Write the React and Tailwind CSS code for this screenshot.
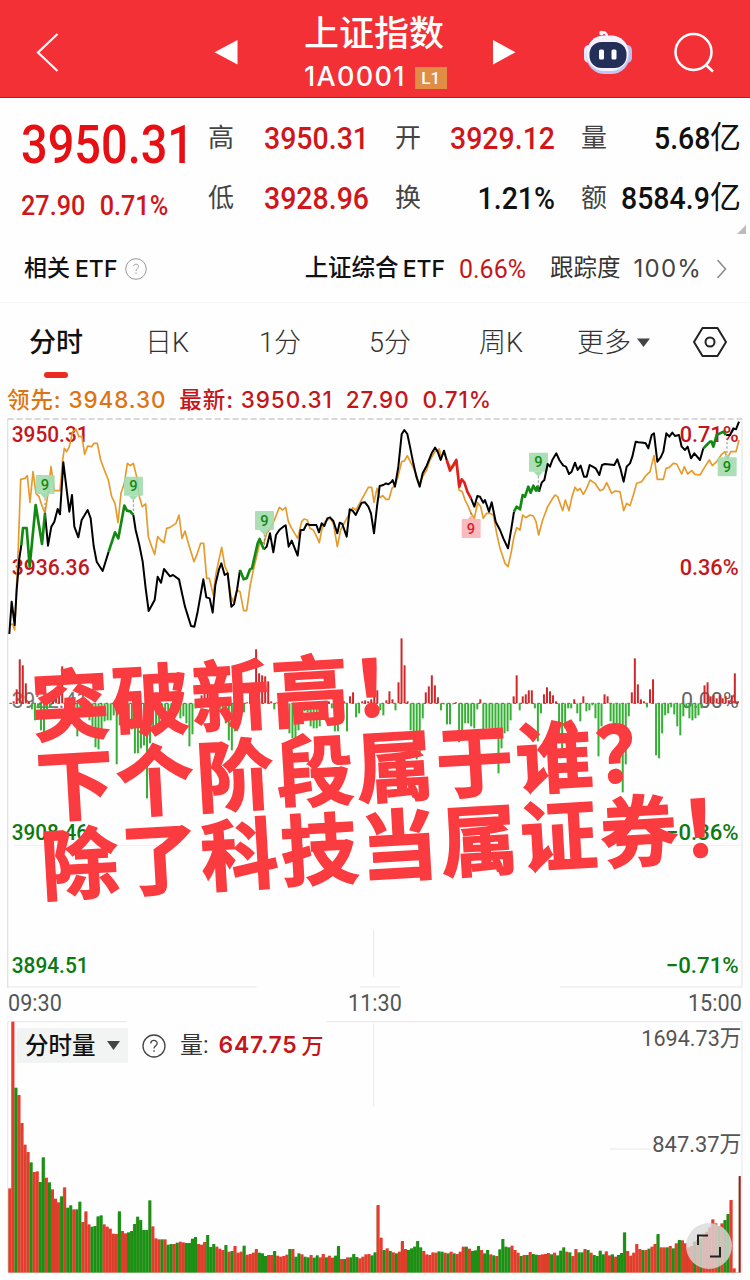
import React from 'react'

const quotes = [
  { label: '高', value: '3950.31', color: 'text-[#d0161a]' },
  { label: '开', value: '3929.12', color: 'text-[#d0161a]' },
  { label: '量', value: '5.68', unit: '亿', color: 'text-[#111]' },
  { label: '低', value: '3928.96', color: 'text-[#d0161a]' },
  { label: '换', value: '1.21%', color: 'text-[#111]' },
  { label: '额', value: '8584.9', unit: '亿', color: 'text-[#111]' }
]

const tabs = ['分时', '日K', '1分', '5分', '周K']

// chart points are stored in chart units, three units to one css pixel
const averageLine =
  '30,975 38,972 44,990 50,850 55,740 62,538 75,535 82,527 90,607 99,515 108,580 117,590 127,620 135,640 144,580 153,500 163,572 180,572 188,480 193,445 200,455 208,440 218,395 228,388 237,410 246,410 254,463 263,438 275,440 282,430 292,430 302,480 315,515 325,540 335,590 345,610 354,668 363,580 373,550 382,490 391,497 400,490 410,530 418,590 427,620 437,612 445,710 455,740 464,763 473,710 482,720 492,728 500,685 510,682 528,670 537,645 546,715 555,693 565,730 582,785 592,760 602,730 611,730 620,835 628,835 640,885 648,820 665,742 675,800 682,815 693,890 700,905 711,870 720,875 731,932 740,932 750,860 760,810 770,770 780,725 792,730 800,700 812,685 825,655 838,622 848,630 857,622 865,665 875,685 893,715 905,665 912,657 922,660 930,685 940,690 950,710 958,728 965,690 975,665 990,655 1000,670 1012,740 1022,690 1035,665 1049,640 1058,623 1068,630 1087,595 1105,562 1115,562 1122,607 1131,565 1140,593 1148,587 1158,598 1167,598 1176,565 1185,555 1194,530 1205,485 1213,483 1222,467 1235,493 1248,520 1258,555 1268,530 1280,510 1290,480 1305,455 1318,447 1322,470 1332,458 1345,490 1355,505 1369,490 1377,570 1387,575 1395,600 1405,620 1413,640 1423,655 1433,608 1442,620 1450,655 1460,640 1470,640 1480,645 1490,700 1500,745 1515,790 1524,800 1533,760 1542,710 1550,683 1560,690 1568,645 1577,653 1590,645 1600,648 1608,665 1616,705 1628,660 1643,620 1655,600 1665,585 1673,590 1688,632 1696,600 1707,632 1716,590 1725,562 1733,572 1740,565 1750,583 1760,565 1770,540 1785,550 1800,572 1810,568 1820,548 1835,580 1845,573 1860,575 1871,632 1880,610 1890,617 1900,585 1910,550 1925,545 1935,530 1950,515 1962,467 1972,538 1990,538 1998,505 2008,502 2020,490 2030,492 2045,522 2053,500 2063,522 2075,512 2085,523 2100,525 2115,500 2128,480 2137,497 2150,485 2165,463 2175,455 2182,475 2192,455 2208,455 2217,420'

const priceLines = [
  {
    color: '#000',
    points: '28,1002 35,905 44,975 50,870 58,775 64,735'
  },
  {
    color: '#000',
    points:
      '135,640 144,737 154,680 163,665 173,627 180,643 190,487 208,635 216,585 223,680 235,712 245,660 263,630 272,655 281,738 290,785 308,813 326,755'
  },
  {
    color: '#000',
    points:
      '400,645 407,690 418,735 428,785 437,865 446,933 464,900 473,830 483,848 492,807 510,829 519,825 537,838 546,880 555,920 573,978 583,980 592,940 610,838 619,892 629,895 638,938 646,855 657,808 664,790 674,825 683,820 694,920 702,913 711,870 720,810'
  },
  {
    color: '#000',
    points:
      '792,748 800,740 810,700 820,757 828,705 838,690 850,680 857,676 866,740 875,722 893,767 902,690 911,690 920,672 930,675 940,675 949,675 957,697 965,670 973,678 982,655 990,652 1000,663 1012,700 1019,668 1027,672 1040,710 1049,628 1058,632 1067,645 1085,608 1095,607 1105,620 1113,640 1122,700 1131,620 1139,558 1150,555 1158,550 1165,553 1175,545 1178,540 1185,560 1195,500 1205,403 1213,390 1222,402 1231,445 1240,490 1249,530 1259,560 1268,520 1280,497 1295,460 1305,443 1313,455 1322,480 1332,452 1340,480'
  },
  {
    color: '#000',
    points:
      '1413,595 1423,620 1432,588 1440,590 1450,608 1455,600 1467,635 1475,607 1481,635 1487,665 1500,690 1510,715 1524,745 1535,680 1542,635'
  },
  {
    color: '#000',
    points:
      '1617,575 1625,548 1633,540 1643,492 1650,500 1657,480 1669,460 1678,480 1690,497 1698,500 1707,522 1715,515 1725,488 1733,510 1742,497 1752,530 1760,530 1769,495 1778,500 1787,505 1798,525 1806,495 1815,492 1843,495 1852,478 1861,505 1871,545 1880,500 1890,490 1897,470 1907,425 1915,427 1930,428 1937,430 1945,445 1955,405 1962,400 1972,485 1982,472 1990,455 1999,400 2008,410 2017,398 2025,408 2037,405 2045,440 2055,450 2063,440 2073,475 2083,460 2100,480 2110,445'
  },
  { color: '#000', points: '2178,405 2190,405 2200,385 2208,388 2217,365' },
  { color: '#128a12', points: '64,735 69,684 80,684 89,800 107,615 126,732 135,640' },
  { color: '#128a12', points: '326,755 345,697 355,715 373,617 381,632 391,634 400,645' },
  { color: '#128a12', points: '720,810 731,838 740,835 750,808 756,805 764,770 773,730 779,717 786,735 792,748' },
  {
    color: '#128a12',
    points: '1542,635 1550,620 1560,628 1568,585 1575,590 1585,560 1592,578 1600,557 1608,572 1612,560 1617,575'
  },
  { color: '#128a12', points: '2110,445 2120,435 2130,425 2135,425 2140,440 2150,405 2160,400 2170,395 2178,405' },
  { color: '#e0201c', points: '1340,480 1350,512 1369,480 1378,560 1385,538 1393,547 1402,575 1413,595' }
]

const markers = [
  { x: 107, y: 525, tail: 'down', to: 640 },
  { x: 372, y: 530, tail: 'down', to: 645 },
  { x: 765, y: 633, tail: 'down', to: 740 },
  { x: 1587, y: 458, tail: 'down', to: 570 },
  { x: 2153, y: 472, tail: 'up', to: 410 },
  { x: 1385, y: 657, tail: 'up', to: 630, red: true }
]

const leftLabels = [
  { text: '3950.31', y: 426, color: '#c4161a', w: 231 },
  { text: '3936.36', y: 824, color: '#c4161a', w: 234 },
  { text: '3922.41', y: 1223, color: '#777', w: 229, light: true },
  { text: '3908.46', y: 1619, color: '#0b7a10', w: 229 },
  { text: '3894.51', y: 2018, color: '#0b7a10', w: 231 }
]

const rightLabels = [
  { text: '0.71%', y: 426, color: '#c4161a', w: 177 },
  { text: '0.36%', y: 824, color: '#c4161a', w: 177 },
  { text: '0.00%', y: 1223, color: '#666', w: 173, light: true },
  { text: '−0.36%', y: 1619, color: '#0b7a10', w: 218 },
  { text: '−0.71%', y: 2018, color: '#0b7a10', w: 219 }
]

const flow = [
  0, 2, 14, 44, 38, 20, 2, -6, -17, -5, -27, -29, -6, -4, 3, 10, 14, 37, -5, -8, -6, -9, -33, -10, -7, -9, -17, -23,
  -44, -46, -33, -18, -17, -17, -12, -61, -22, -18, -20, -20, -26, -50, -50, -45, -42, -95, -40, -25, -25, -22, -20,
  -18, -14, -16, -14, -10, -15, -13, -20, -43, -31, -5, 3, 8, 12, 14, 18, 10, 6, -6, -12, -20, -37, -47, -28, -10, -6,
  -9, 1, 12, 20, 54, 30, 28, 27, 22, 2, -6, 1, 2, -3, -15, -30, -35, -35, -27, -20, -8, -9, -23, -25, -25, -23, -6,
  -3, 2, -5, -28, -28, -4, 2, -28, 7, 11, -14, -10, 2, 3, 2, 4, 45, 13, -7, -12, 3, 12, 4, -7, 21, 65, 38, 2, -27,
  -45, -56, -50, -15, 11, 17, 28, 18, 6, -7, -1, -21, -21, -1, 1, -39, -37, -20, -20, -23, -25, -6, 4, -35, -25, -25,
  -25, -27, -70, -45, -30, -28, -17, 7, 28, -7, 7, 9, 13, 13, -5, -38, -10, 9, 16, 12, 8, 2, -40, -45, -25, -5, -5, 4,
  -10, -18, 7, -8, -7, -2, -15, -53, -23, 9, 7, -18, -20, -20, -27, -89, -61, -13, 11, 45, 19, 4, 2, -4, 14, 24, -52,
  -55, -30, -12, -10, -4, -11, -23, -32, -13, -5, -15, -17, -15, -12, -5, 18, 21, 7, 8, 5, 8, 5, 7, 3, 8, 30, 2
]

// top edge of every minute's volume bar, suffixed with its direction
const volumes =
  '745r 245r 443g 465r 549r 614r 636r 667g 696r 694r 726g 652g 713r 727g 748r 776r 787r 769g 742r 803g 796g 808r 808g 785g 846r 814r 853r 860g 858g 829g 826g 853r 860r 866r 881r 882r 814g 873r 880r 877g 873g 852g 830g 840g 870g 870g 781g 859r 895r 898r 898g 898r 914g 912g 912r 908g 905r 907r 909g 909g 896g 891g 912r 914r 906r 885g 921g 912g 920r 926r 930r 915g 935r 933g 918r 938r 935r 917g 944r 942r 938r 927r 938g 940g 948g 945r 945r 933g 947r 950r 948r 944r 927g 927r 950g 940g 943r 950g 952g 945r 953g 946g 952r 942r 952g 947r 953r 947g 918g 957r 957g 952r 952g 942g 951g 955r 950r 943r 942r 946g 937g 795r 893r 930g 925r 933g 937r 940g 935r 903r 927r 930g 925g 920g 903g 922g 933r 943r 945r 937r 938r 934g 935g 938r 940g 935r 940g 942r 935r 920r 920g 926r 933g 931g 918g 930r 940g 930g 943r 946g 948r 928g 897g 920g 922g 917r 930r 938r 948g 945r 945g 936r 942g 944g 945r 943r 942r 939r 943g 938r 946g 932g 922g 935r 937g 948r 927r 937g 937g 927r 930g 938r 945g 948g 932g 943g 934r 946r 943g 950r 945g 939g 877g 933r 947r 938r 912r 927r 930g 930r 926g 920r 912r 882g 922r 922r 922g 918r 925g 910r 900g 901r 910r 922r 918r 905g 900r 895g 885r 875r 862r 838r 850r 858g 850r 840g 822g 780r 985r 997r 708r'.split(
    ' '
  )

const AxisLabel = ({ x, y, text, color, w, light, anchor }) => (
  <text
    x={x}
    y={y}
    fill={color}
    fontSize="67"
    fontFamily="Roboto, sans-serif"
    fontWeight={light ? 400 : 500}
    textLength={w}
    lengthAdjust="spacingAndGlyphs"
    textAnchor={anchor}
  >
    {text}
  </text>
)

const Marker = ({ x, y, tail, to, red }) => {
  const box = red ? '#f9b4b7' : '#a3dcae'
  return (
    <g>
      <line
        x1={x + 28}
        x2={x + 28}
        y1={tail === 'down' ? y + 57 : y}
        y2={to}
        stroke="#777"
        strokeWidth="2.5"
        strokeDasharray="7 6"
      />
      <rect x={x} y={y} width="57" height="57" rx="3" fill={box} opacity="0.9" />
      <path
        d={
          tail === 'down'
            ? `M${x + 14} ${y + 57}L${x + 28} ${y + 72}L${x + 42} ${y + 57}Z`
            : `M${x + 18} ${y}L${x + 28} ${y - 10}L${x + 38} ${y}Z`
        }
        fill={box}
      />
      <text
        x={x + 28}
        y={y + 44}
        textAnchor="middle"
        fontSize="44"
        fontFamily="Roboto, sans-serif"
        fontWeight="500"
        fill={red ? '#d8222a' : '#128a12'}
      >
        9
      </text>
    </g>
  )
}

const Robot = () => (
  <svg className="h-[46px] w-[50px]" viewBox="0 0 50 46">
    <path d="M24 8C24 4 21 2.500 18.500 3.500" fill="none" stroke="#f4f2ff" strokeWidth="2.500" strokeLinecap="round" />
    <circle cx="18.500" cy="4" r="2.200" fill="#fff" />
    <rect x="1" y="16" width="10" height="18" rx="5" fill="#e9e8fb" />
    <rect x="39" y="16" width="10" height="18" rx="5" fill="#b9bdf0" />
    <rect x="3.500" y="7" width="43" height="38" rx="18" fill="#c3c5f2" />
    <rect x="3.500" y="6.500" width="42" height="35.500" rx="17.500" fill="#f3f2fd" />
    <rect x="6.500" y="13" width="37" height="26" rx="12" fill="#232f56" />
    <rect x="16" y="20.500" width="5" height="10" rx="1.500" fill="#fff" />
    <rect x="28.500" y="20.500" width="5" height="10" rx="1.500" fill="#fff" />
  </svg>
)

const Header = () => (
  <header className="grid h-[98px] grid-cols-[214px_90px_141px_71px_68px_90px_auto] border-b border-[#a3242c] bg-[#f43037] text-white">
    <div className="pt-[32px] pl-[36px]">
      <svg className="h-[40px] w-[24px]" viewBox="0 0 24 40">
        <path d="M21.500 2L2 20.500L21.500 39" fill="none" stroke="#fff" strokeWidth="2.200" />
      </svg>
    </div>
    <svg className="mt-[39px] h-[26px] w-[24px]" viewBox="0 0 24 26">
      <path d="M0.500 13.300L23.500 1V25.500Z" fill="#fff" />
    </svg>
    <div className="flex flex-col">
      <h1 className="mt-[12px] text-[35px] leading-[46px] font-medium whitespace-nowrap">上证指数</h1>
      <div className="mt-[5px] flex items-center">
        <span className="font-['Inter'] text-[27px] leading-[28px] font-medium tracking-[1.3px]">1A0001</span>
        <span className="mt-[1px] ml-[9px] h-[22px] w-[32px] shrink-0 bg-[#e28d45] text-center text-[17px] leading-[22px] font-medium">
          L1
        </span>
      </div>
    </div>
    <div className="flex justify-end pt-[39px]">
      <svg className="h-[26px] w-[24px]" viewBox="0 0 24 26">
        <path d="M23.500 13.300L1 1V25.500Z" fill="#fff" />
      </svg>
    </div>
    <div />
    <div className="-ml-[1px] pt-[29px]">
      <Robot />
    </div>
    <svg className="mt-[31px] h-[44px] w-[44px]" viewBox="0 0 44 44">
      <circle cx="19.500" cy="21" r="18" fill="none" stroke="#fff" strokeWidth="2.500" />
      <path d="M31.500 33.500L39 40.500" stroke="#fff" strokeWidth="2.500" />
    </svg>
  </header>
)

const Quote = () => (
  <section className="relative flex h-[138px]">
    <div className="w-[208px] pl-[21px]">
      <p className="mt-[19px] origin-left scale-x-[0.885] text-[53px] leading-[56px] font-medium text-[#e60f14]">
        3950.31
      </p>
      <p className="mt-[17px] flex origin-left scale-x-[0.9] gap-[16px] text-[28px] leading-[32px] font-medium text-[#d0161a]">
        <span>27.90</span>
        <span>0.71%</span>
      </p>
    </div>
    <div className="mt-[10px] grid h-[120px] w-[533px] grid-cols-[161px_26px_160px_26px_160px] grid-rows-[60px_60px]">
      {[0, 3].map((row) => (
        <React.Fragment key={row}>
          <QuoteCell quote={quotes[row]} />
          <div />
          <QuoteCell quote={quotes[row + 1]} />
          <div />
          <QuoteCell quote={quotes[row + 2]} />
        </React.Fragment>
      ))}
    </div>
    <svg className="absolute right-[4px] bottom-[2px] h-[9px] w-[9px]" viewBox="0 0 9 9">
      <path d="M9 0V9H0Z" fill="#bbb" />
    </svg>
  </section>
)

const QuoteCell = ({ quote }) => (
  <div className="flex items-center justify-between">
    <span className="text-[26px] text-[#444]">{quote.label}</span>
    <span
      className={`flex w-0 items-center justify-end text-[32px] leading-[40px] font-medium whitespace-nowrap ${quote.color}`}
    >
      <span className="origin-right scale-x-[0.89]">{quote.value}</span>
      {quote.unit && <span className="text-[31px] font-normal">{quote.unit}</span>}
    </span>
  </div>
)

const EtfRow = () => (
  <section className="flex h-[66px] items-center pr-[23px] pl-[24px] text-[23px] whitespace-nowrap text-[#111]">
    <span className="font-medium">相关</span>
    <span className="ml-[5px] font-['Inter'] font-medium">ETF</span>
    <svg className="ml-[8px] h-[22px] w-[22px]" viewBox="0 0 22 22">
      <circle cx="11" cy="11" r="10.300" fill="none" stroke="#999" strokeWidth="1" />
      <path d="M8.500 8C9 5.500 13.500 5.500 13.500 8.500C13.500 10.500 11 10.500 11 13" fill="none" stroke="#999" />
      <path d="M11 14.500V16" stroke="#999" />
    </svg>
    <div className="ml-auto flex items-center">
      <span className="text-[23.500px] font-medium">上证综合</span>
      <span className="ml-[4px] font-['Inter'] font-medium">ETF</span>
      <span className="ml-[14px] w-[67px] origin-left scale-x-[0.96] text-[26px] text-[#c4161a]">0.66%</span>
      <span className="ml-[24px] text-[23.500px] text-[#333]">跟踪度</span>
      <span className="ml-[13px] font-['Inter'] text-[24px] tracking-[1.2px] text-[#444]">100%</span>
      <svg className="ml-[14px] h-[20px] w-[11px]" viewBox="0 0 11 20">
        <path d="M1.500 1L9.500 10L1.500 19" fill="none" stroke="#888" strokeWidth="1.500" />
      </svg>
    </div>
  </section>
)

const Tabs = () => (
  <nav className="grid h-[80px] grid-cols-[116px_114px_110px_110px_98px_117px_auto] border-t border-[#f7f7f7] pl-[29px] text-[27px] font-light text-[#333]">
    {tabs.map((tab, index) => (
      <div key={tab} className="flex flex-col items-start pt-[20px] leading-[40px]">
        <span className={index === 0 ? 'font-medium text-[#111]' : ''}>{tab}</span>
        {index === 0 && <span className="mt-[9px] ml-[15px] h-[6px] w-[24px] rounded-full bg-[#ee2b23]" />}
      </div>
    ))}
    <div className="flex items-start pt-[20px] leading-[40px]">
      更多
      <svg className="mt-[15px] ml-[6px] h-[9px] w-[13px]" viewBox="0 0 13 9">
        <path d="M0 0.500H13L6.500 9Z" fill="#444" />
      </svg>
    </div>
    <svg className="mt-[23px] -ml-[1px] h-[32px] w-[34px]" viewBox="0 0 34 32">
      <path d="M9.500 2H24.500L33 16L24.500 30H9.500L1 16Z" fill="none" stroke="#222" strokeWidth="2" strokeLinejoin="round" />
      <circle cx="17" cy="16" r="4.500" fill="none" stroke="#222" strokeWidth="2" />
    </svg>
  </nav>
)

const Legend = () => (
  <div className="flex h-[35px] items-center pl-[7px] font-['Inter','Noto_Sans_CJK_SC',sans-serif] text-[22.500px] leading-[35px] font-medium tracking-[0.9px] whitespace-nowrap text-[#c4161a]">
    <span className="text-[#dd7414]">领先: 3948.30</span>
    <span className="ml-[13px]">最新: 3950.31</span>
    <span className="ml-[13px]">27.90</span>
    <span className="ml-[13px]">0.71%</span>
  </div>
)

const PriceChart = () => (
  <div className="relative h-[571px]">
    <svg className="block h-[571px] w-[750px]" viewBox="0 351 2250 1713">
      <path d="M23 357V2063" stroke="#e2e2e2" strokeWidth="4" />
      <path d="M2226 357V2063" stroke="#e8e8e8" strokeWidth="4" />
      <path d="M23 357H2226" stroke="#ccc" strokeWidth="4" strokeDasharray="18 9" />
      <path d="M23 2061H770M1080 2061H1200M1680 2061H2226" stroke="#e6e6e6" strokeWidth="3" />
      <path d="M1121 1890V2030" stroke="#e6e6e6" strokeWidth="3" />
      <path d="M40 1636H560M2000 1636H2226" stroke="#efefef" strokeWidth="3" />

      {leftLabels.map((label) => (
        <AxisLabel key={label.text} x={35} {...label} />
      ))}
      {rightLabels.map((label) => (
        <AxisLabel key={label.text} x={2216} anchor="end" {...label} />
      ))}

      <path d="M28 1210H2220" stroke="#8a3b35" strokeWidth="3" strokeDasharray="8 10" />
      {flow.map((value, index) => (
        <rect
          key={index}
          x={29 + index * 9.09}
          y={value > 0 ? 1210 - value * 3 : 1210}
          width="6"
          height={Math.abs(value) * 3}
          fill={value > 0 ? '#d0282a' : '#35b034'}
        />
      ))}

      <polyline points={averageLine} fill="none" stroke="#e69a2b" strokeWidth="5" strokeLinejoin="round" />
      {markers.map((marker) => (
        <Marker key={marker.x} {...marker} />
      ))}
      {priceLines.map((line) => (
        <polyline
          key={line.points}
          points={line.points}
          fill="none"
          stroke={line.color}
          strokeWidth={line.color === '#000' ? 6 : 8}
          strokeLinejoin="round"
        />
      ))}
    </svg>

    <div className="absolute top-[254px] left-[30px] origin-top-left -rotate-[3.3deg] text-[77px] leading-[79.500px] font-bold tracking-[3px] whitespace-nowrap text-[#fa3b3f] [-webkit-text-stroke:1.8px_#fa3b3f]">
      <p>突破新高！</p>
      <p>下个阶段属于谁？</p>
      <p>除了科技当属证券！</p>
    </div>
  </div>
)

const VolumeChart = () => (
  <div className="relative h-[252px]">
    <svg className="block h-[252px] w-[750px]" viewBox="0 243 2250 756">
      <path d="M23 245H380M980 245H2226" stroke="#e6e6e6" strokeWidth="3" />
      <path d="M23 245V997M2226 245V997" stroke="#ececec" strokeWidth="4" />
      <path d="M1121 250V500" stroke="#e8e8e8" strokeWidth="3" />
      <path d="M1830 627H1950" stroke="#e8e8e8" strokeWidth="3" />
      {volumes.map((bar, index) => {
        const top = parseInt(bar)
        return (
          <rect
            key={index}
            x={25 + index * 9.13}
            y={top}
            width={index === 240 ? 6 : 9.2}
            height={998 - top}
            fill={index === 240 ? '#a01c22' : bar.endsWith('r') ? '#ea3a2d' : '#169314'}
          />
        )
      })}
      {volumes.map((bar, index) => (
        <path
          key={index}
          d={`M${25 + index * 9.13} ${parseInt(bar) + 4}V998`}
          stroke="#6b6b12"
          strokeWidth="1.500"
          opacity="0.55"
        />
      ))}
      <text
        x="1924"
        y="317"
        fill="#555"
        fontSize="67"
        fontFamily="Roboto, 'Noto Sans CJK SC', sans-serif"
        textLength="300"
        lengthAdjust="spacingAndGlyphs"
      >
        1694.73万
      </text>
      <text
        x="1957"
        y="637"
        fill="#555"
        fontSize="67"
        fontFamily="Roboto, 'Noto Sans CJK SC', sans-serif"
        textLength="267"
        lengthAdjust="spacingAndGlyphs"
      >
        847.37万
      </text>
    </svg>

    <div className="absolute top-[7px] left-[17px] flex h-[35px] items-center whitespace-nowrap">
      <div className="flex h-[35px] w-[111px] items-center bg-[#f2f3f3] pl-[8px] text-[23.500px] font-medium text-[#111]">
        <span className="mt-[2px]">分时量</span>
        <svg className="ml-[11px] h-[9px] w-[13px]" viewBox="0 0 13 9">
          <path d="M0 0H13L6.500 9Z" fill="#444" />
        </svg>
      </div>
      <svg className="ml-[14px] h-[24px] w-[24px]" viewBox="0 0 24 24">
        <circle cx="12" cy="12" r="11" fill="none" stroke="#444" strokeWidth="1.300" />
        <path
          d="M8.800 9.500C8.800 5.500 15.200 5.500 15.200 9.300C15.200 11.800 12 11.700 12 14.500"
          fill="none"
          stroke="#444"
          strokeWidth="1.300"
        />
        <path d="M12 16.200V17.800" stroke="#444" strokeWidth="1.400" />
      </svg>
      <span className="mt-[2px] ml-[14px] text-[23px] text-[#333]">量:</span>
      <span className="ml-[10px] font-['Inter'] text-[23px] font-semibold tracking-[0.7px] text-[#c4161a]">647.75</span>
      <span className="mt-[2px] ml-[4px] text-[22px] font-medium text-[#c4161a]">万</span>
    </div>

    <button className="absolute top-[202px] left-[686px] h-[46px] w-[46px] rounded-full bg-[#d9d9d9]/80">
      <svg className="h-[46px] w-[46px]" viewBox="0 0 46 46">
        <path d="M12 22V12.500H22M24 33.500H34V24" fill="none" stroke="#222" strokeWidth="2" />
      </svg>
    </button>
  </div>
)

const App = () => {
  return (
    <div className="h-[1280px] w-[750px] overflow-hidden bg-[#fefefe] font-['Roboto','Noto_Sans_CJK_SC',sans-serif]">
      <Header />
      <Quote />
      <EtfRow />
      <Tabs />
      <Legend />
      <PriceChart />
      <div className="flex h-[33px] items-center justify-between pr-[8px] pb-[4px] pl-[8px] text-[24px] text-[#555]">
        <span className="origin-left scale-x-[0.9]">09:30</span>
        <span className="origin-center scale-x-[0.9]">11:30</span>
        <span className="origin-right scale-x-[0.9]">15:00</span>
      </div>
      <VolumeChart />
    </div>
  )
}

export default App
